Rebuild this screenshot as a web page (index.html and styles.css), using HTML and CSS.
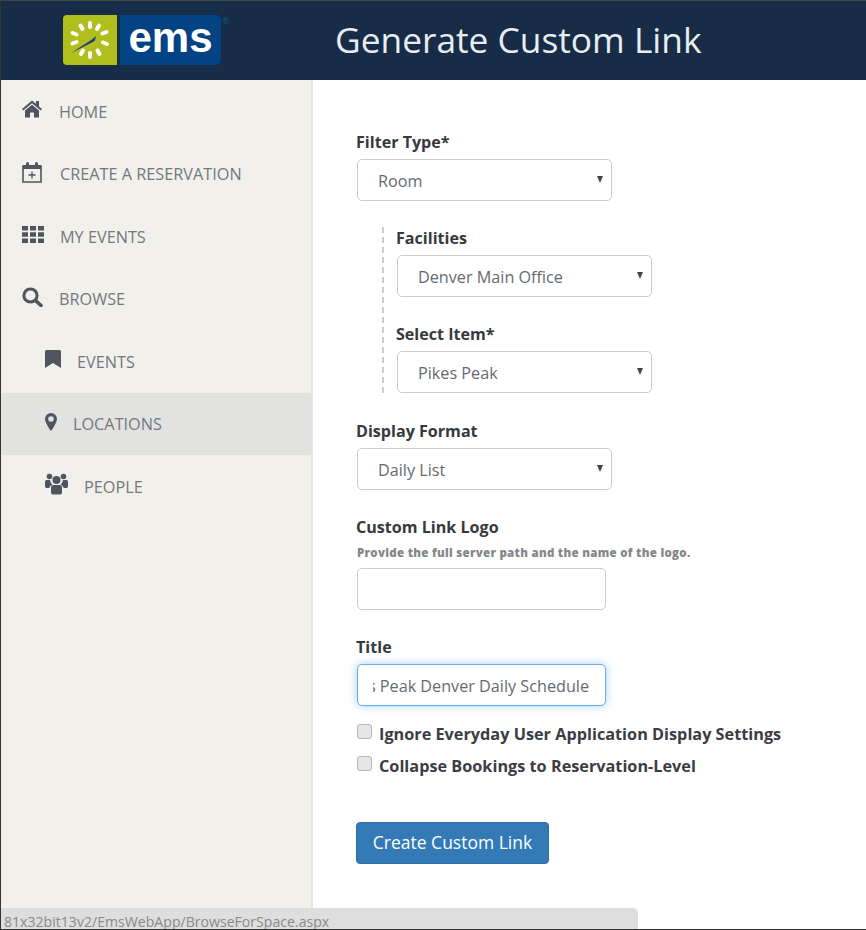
FILE: index.html
```html
<!DOCTYPE html>
<html lang="en">
<head>
    <meta charset="UTF-8">
    <meta name="viewport" content="width=device-width, initial-scale=1.0">
    <title>Generate Custom Link</title>
    <link rel="stylesheet" href="styles.css">
</head>
<body>
    <div class="page">
        <header class="topbar">
            <div class="logo">
                <div class="logo-mark">
                    <svg viewBox="0 0 54 50" width="54" height="50">
                        <g fill="none" stroke="#fff" stroke-width="4" stroke-linecap="round">
                            <path d="M27 8v4M36 10.500l-2 3.500M43.500 17l-4 1.500M44 29l-4-1.500M36.500 39l-2-3.500M27 42v-4M18 39l2-3.500M9.500 28.500l4-1.500M9.500 18l4 1.500M17.500 10.500l2 3.500"/>
                        </g>
                        <path d="M8 38L29 24.500l4-3.500-1 4.500-3 2z" fill="#1f3f73"/>
                    </svg>
                </div>
                <div class="logo-word">ems</div>
                <span class="logo-reg">&reg;</span>
            </div>
            <h1 class="page-title">Generate Custom Link</h1>
        </header>
        <div class="layout">
            <nav class="sidebar">
                <a class="nav-item nav-home">
                    <svg class="icon" viewBox="0 0 20 18" width="20" height="18"><path d="M10 0.500L0 9l1.200 1.500L10 3.200l8.800 7.300L20 9l-3-2.600V1h-3v2.800z"/><path d="M10 4.800L3 10.600V17.500h5v-5h4v5h5v-6.900z"/></svg>
                    <span>HOME</span>
                </a>
                <a class="nav-item">
                    <svg class="icon" viewBox="0 0 20 22" width="20" height="22"><path d="M1 5h18v16H1z" fill="none" stroke="currentColor" stroke-width="1.600"/><path d="M1 4h18v4H1z"/><rect x="4" y="1" width="3" height="5" rx="1.500"/><rect x="13" y="1" width="3" height="5" rx="1.500"/><path d="M10 10.500v7M6.500 14h7" fill="none" stroke="currentColor" stroke-width="1.300"/></svg>
                    <span>CREATE A RESERVATION</span>
                </a>
                <a class="nav-item nav-wide">
                    <svg class="icon" viewBox="0 0 22 17" width="22" height="17"><path d="M0 0h6v4.500H0zM8 0h6v4.500H8zM16 0h6v4.500h-6zM0 6.200h6v4.600H0zM8 6.200h6v4.600H8zM16 6.200h6v4.600h-6zM0 12.500h6V17H0zM8 12.500h6V17H8zM16 12.500h6V17h-6z"/></svg>
                    <span>MY EVENTS</span>
                </a>
                <a class="nav-item nav-wide">
                    <svg class="icon" viewBox="0 0 21 20" width="21" height="20"><circle cx="8.500" cy="8.500" r="6.600" fill="none" stroke="currentColor" stroke-width="3"/><path d="M13.500 13.500l5.500 5" fill="none" stroke="currentColor" stroke-width="3.600" stroke-linecap="round"/></svg>
                    <span>BROWSE</span>
                </a>
                <a class="nav-item nav-sub">
                    <svg class="icon" viewBox="0 0 16 18" width="16" height="18"><path d="M0 1.500Q0 0 1.500 0h13Q16 0 16 1.500V18l-8-5-8 5z"/></svg>
                    <span>EVENTS</span>
                </a>
                <a class="nav-item nav-sub active">
                    <svg class="icon" viewBox="0 0 12 18" width="12" height="18"><path fill-rule="evenodd" d="M6 0a6 6 0 0 1 6 6c0 2.500-3.500 9-6 12C3.500 15 0 8.500 0 6a6 6 0 0 1 6-6zm0 3.200a2.800 2.800 0 1 0 0 5.600 2.800 2.800 0 0 0 0-5.600z"/></svg>
                    <span>LOCATIONS</span>
                </a>
                <a class="nav-item nav-sub">
                    <svg class="icon" viewBox="0 0 23 22" width="23" height="22"><circle cx="4.500" cy="3.500" r="2.800"/><circle cx="18.500" cy="3.500" r="2.800"/><circle cx="11.500" cy="7" r="4"/><path d="M0 8.500Q0 7 1.500 7H5q.5 3 2.500 4.500Q5 12.500 4.200 15H1.500Q0 15 0 13zM23 8.500Q23 7 21.500 7H18q-.5 3-2.500 4.500Q18 12.500 18.800 15h2.700Q23 15 23 13z"/><path d="M6 14.500Q6 12 8.500 12h6q2.500 0 2.500 2.500v5q0 2-2 2H8q-2 0-2-2z"/></svg>
                    <span>PEOPLE</span>
                </a>
            </nav>
            <main class="content">
                <form class="link-form">
                    <div class="field">
                        <label class="field-label">Filter Type*</label>
                        <div class="select-wrap">
                            <select class="control"><option>Room</option></select>
                        </div>
                    </div>
                    <div class="sub-fields">
                        <div class="field">
                            <label class="field-label">Facilities</label>
                            <div class="select-wrap">
                                <select class="control"><option>Denver Main Office</option></select>
                            </div>
                        </div>
                        <div class="field">
                            <label class="field-label">Select Item*</label>
                            <div class="select-wrap">
                                <select class="control"><option>Pikes Peak</option></select>
                            </div>
                        </div>
                    </div>
                    <div class="field">
                        <label class="field-label">Display Format</label>
                        <div class="select-wrap">
                            <select class="control"><option>Daily List</option></select>
                        </div>
                    </div>
                    <div class="field">
                        <label class="field-label">Custom Link Logo</label>
                        <p class="hint">Provide the full server path and the name of the logo.</p>
                        <input class="control text-input" type="text">
                    </div>
                    <div class="field">
                        <label class="field-label">Title</label>
                        <input class="control text-input focused" type="text" value="Pikes Peak Denver Daily Schedule">
                    </div>
                    <div class="checks">
                        <label class="check"><input type="checkbox"><span>Ignore Everyday User Application Display Settings</span></label>
                        <label class="check"><input type="checkbox"><span>Collapse Bookings to Reservation-Level</span></label>
                    </div>
                    <button class="btn-create" type="button">Create Custom Link</button>
                </form>
            </main>
        </div>
        <div class="status-bar">81x32bit13v2/EmsWebApp/BrowseForSpace.aspx</div>
    </div>
</body>
</html>
```

FILE: styles.css
```css
html, body {
    margin: 0;
    padding: 0;
    height: 100%;
}
body {
    font-family: "Open Sans", Arial, sans-serif;
    color: #333;
    background: #fff;
}
.page {
    position: relative;
    height: 930px;
    box-sizing: border-box;
    border-left: 1px solid #333;
    border-top: 1px solid #444;
    border-bottom: 1px solid #333;
    overflow: hidden;
    display: flex;
    flex-direction: column;
}

/* header */
.topbar {
    height: 79px;
    flex: none;
    background: #162c47;
    display: flex;
    align-items: center;
    padding-left: 62px;
}
.logo {
    display: flex;
    align-items: stretch;
    height: 50px;
    width: 272px;
    margin-top: -1px;
}
.logo-mark {
    width: 54px;
    height: 50px;
    background: #b0bf1e;
    border-radius: 4px 0 0 4px;
}
.logo-word {
    width: 101px;
    margin-left: 3px;
    background: #044383;
    border-radius: 0 5px 5px 0;
    color: #fff;
    font-family: "Liberation Sans", Arial, sans-serif;
    font-weight: bold;
    font-size: 42px;
    line-height: 46px;
    text-align: center;
}
.logo-reg {
    color: #1d4f85;
    font-size: 9px;
    line-height: 12px;
    margin-left: 1px;
}
.page-title {
    margin: -3px 0 0;
    font-size: 35.3px;
    font-weight: 400;
    color: #e9edf1;
}

/* sidebar */
.layout {
    flex: 1;
    display: flex;
    min-height: 0;
}
.sidebar {
    width: 310px;
    flex: none;
    background: #f2f0eb;
    border-right: 2px solid #e4e4e4;
}
.nav-item {
    height: 62.5px;
    display: flex;
    align-items: center;
    padding-left: 21px;
    font-size: 16.25px;
    color: #737880;
}
.nav-item span {
    padding-top: 1px;
}
.nav-item .icon {
    fill: currentColor;
    color: #50545f;
    flex: none;
    margin-top: -4px;
    margin-right: 18px;
}
.nav-home .icon {
    margin-right: 17px;
}
.nav-wide .icon {
    margin-right: 16px;
}
.nav-wide:nth-child(4) .icon {
    margin-right: 16px;
}
.nav-sub {
    padding-left: 44px;
}
.nav-sub .icon {
    margin-right: 16px;
}
.nav-item.active {
    background: #e2e2e0;
}

/* form */
.content {
    flex: 1;
    padding: 51px 0 0 43px;
}
.field {
    margin-bottom: 26px;
}
.field-label {
    display: block;
    font-weight: 700;
    font-size: 16.1px;
    line-height: 22px;
    margin-bottom: 6px;
    color: #38393d;
}
.control {
    display: block;
    box-sizing: border-box;
    height: 42px;
    font-family: inherit;
    font-size: 16.2px;
    color: #666a70;
    background: #fff;
    border: 1px solid #ccc;
    border-radius: 5px;
}
.select-wrap {
    position: relative;
    width: 255px;
    margin-left: 1px;
}
.select-wrap select {
    width: 100%;
    padding: 2px 24px 0 20px;
    appearance: none;
    -webkit-appearance: none;
}
.select-wrap::after {
    content: "";
    position: absolute;
    right: 9px;
    top: 17px;
    border-left: 3.500px solid transparent;
    border-right: 3.500px solid transparent;
    border-top: 7px solid #444;
}
.sub-fields {
    margin: 24px 0 27px 26px;
    padding-left: 12px;
    border-left: 2px dashed #ccc;
}
.sub-fields .field:last-child {
    margin-bottom: 0;
}
.hint {
    margin: -1px 0 5px 1px;
    font-size: 11.5px;
    line-height: 20px;
    font-weight: 800;
    letter-spacing: 0.3px;
    color: #85878a;
}
.text-input {
    width: 249px;
    margin-left: 1px;
    padding: 2px 16px 0 15px;
}
.text-input.focused {
    direction: rtl;
    border-color: #66afe9;
    box-shadow: 0 0 8px rgba(102, 175, 233, 0.6);
    outline: none;
}
.checks {
    margin-top: -9px;
}
.check {
    display: flex;
    align-items: flex-start;
    height: 32px;
    font-weight: 700;
    font-size: 16.25px;
    line-height: 22px;
    color: #3c3d44;
}
.check input {
    appearance: none;
    -webkit-appearance: none;
    width: 15px;
    height: 15px;
    margin: 1px 7px 0 1px;
    flex: none;
    background: #e6e6e6;
    border: 1px solid #b5b5b5;
    border-radius: 3px;
}
.btn-create {
    display: block;
    margin-top: 35px;
    width: 193px;
    height: 42px;
    padding: 0 0 2px;
    font-family: inherit;
    font-size: 17.5px;
    color: #fff;
    background: #337ab7;
    border: 1px solid #2e6da4;
    border-radius: 4px;
}

/* browser link preview over the bottom corner */
.status-bar {
    position: absolute;
    left: 0;
    bottom: 0;
    width: 637px;
    height: 21px;
    box-sizing: border-box;
    padding-left: 3px;
    background: #dedede;
    border-top-right-radius: 5px;
    font-size: 14.1px;
    line-height: 28px;
    color: #8a8a8a;
    overflow: hidden;
    white-space: nowrap;
}
```
